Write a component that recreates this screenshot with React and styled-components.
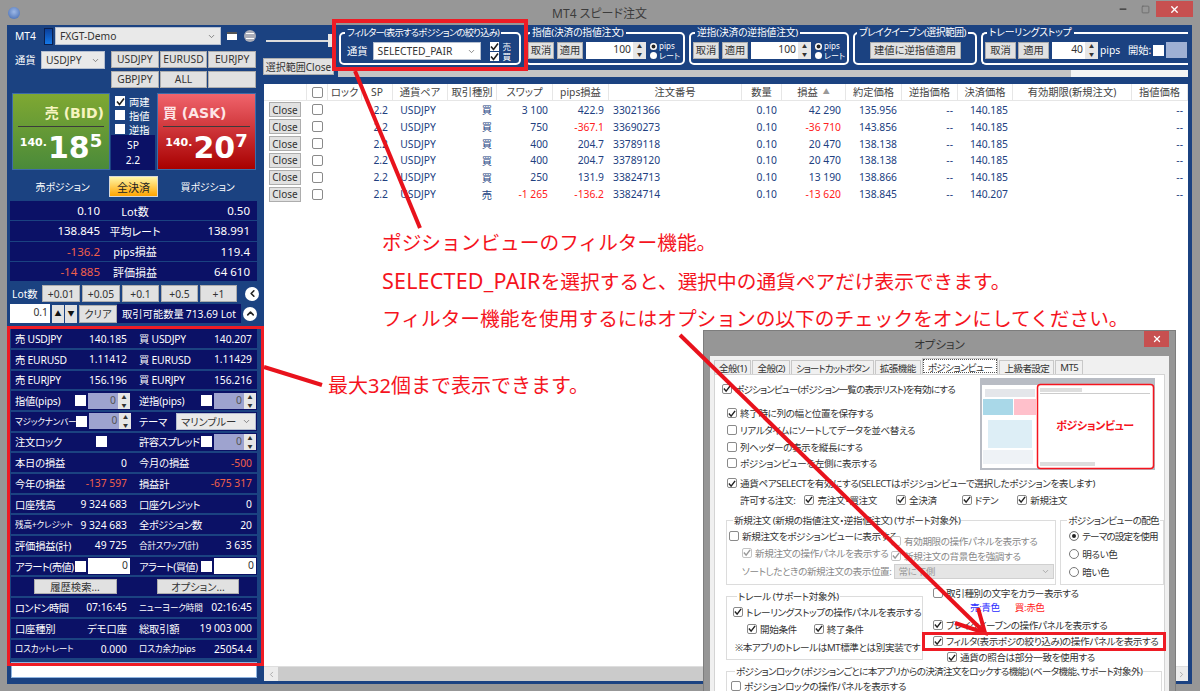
import React from "react";
import styled, { createGlobalStyle } from "styled-components";
import { ChevronDown, ChevronLeft, ChevronRight, ChevronUp, Minus, Square, X } from "lucide-react";

const FONT = `"Noto Sans", "Noto Sans CJK JP", sans-serif`;
const NAVY = "#0b1166";
const BLUE = "#1b4281";
const TABLE_COLS = "43px 21px 34px 31px 55px 49px 56px 56px 133px 40px 64px 56px 56px 55px 119px 56px";

const GlobalStyle = createGlobalStyle`
  html, body {
    margin: 0;
    padding: 0;
    width: 1200px;
    height: 691px;
    overflow: hidden;
    background: #979797;
  }
  body {
    font-family: ${FONT};
    font-size: 10.3px;
    font-feature-settings: "palt";
  }
  * { box-sizing: border-box; }
`;

const Page = styled.div`
  position: relative;
  width: 1200px;
  height: 691px;
  overflow: hidden;
  background: #979797;
  padding: 0 8px 7px 7px;
  display: flex;
  flex-direction: column;
`;

const TitleBar = styled.div`
  height: 25px;
  flex: none;
  display: flex;
  align-items: center;
  justify-content: center;
  position: relative;
  color: #3c3c3c;
  font-size: 12px;
`;

const AppIcon = styled.span`
  position: absolute;
  left: 1px;
  top: 7px;
  width: 12px;
  height: 12px;
  border-radius: 50%;
  background: radial-gradient(circle at 50% 40%, #9db8e6, #3d66b0);
`;

const WinButtons = styled.div`
  position: absolute;
  right: -1px;
  top: 1px;
  display: flex;
  align-items: center;
`;

const WinBtn = styled.span`
  width: ${(p) => p.$w || 22}px;
  height: 16px;
  display: flex;
  align-items: center;
  justify-content: center;
  background: ${(p) => p.$bg || "transparent"};
  color: ${(p) => p.$color || "#333"};
`;

const Body = styled.div`
  flex: 1;
  min-height: 0;
  display: flex;
  background: ${BLUE};
`;

/* ---------- left panel ---------- */

const Left = styled.div`
  width: 250px;
  flex: none;
  padding-top: 2px;
  display: flex;
  flex-direction: column;
  color: #fff;
`;

const AccountRow = styled.div`
  height: 18px;
  display: flex;
  align-items: center;
  padding-left: 8px;
`;

const Connection = styled.span`
  width: 9px;
  height: 17px;
  margin-left: 8px;
  margin-right: 2px;
  border: 1px solid #0a2050;
  background: linear-gradient(#0b3f9a, #1478e8);
`;

const SelectBox = styled.div`
  width: ${(p) => p.$w}px;
  height: ${(p) => p.$h || 18}px;
  flex: none;
  display: flex;
  align-items: center;
  justify-content: space-between;
  padding: 0 4px;
  background: ${(p) => p.$bg || "#e9e9e9"};
  color: #333;
  border: 1px solid #b5bfd0;
  white-space: nowrap;
`;

const MiniWindow = styled.span`
  width: 10px;
  height: 8px;
  margin-left: 6px;
  background: #fff;
  border-top: 2px solid #555;
`;

const Burger = styled.span`
  width: 12px;
  height: 12px;
  margin-left: 7px;
  border-radius: 50%;
  background: #a9acb8;
  display: flex;
  align-items: center;
  justify-content: center;
  &::after {
    content: "";
    width: 8px;
    height: 4px;
    border-top: 1px solid #fff;
    border-bottom: 1px solid #fff;
  }
`;

const CurrencyRow = styled.div`
  margin-top: 6px;
  height: 37px;
  display: flex;
  padding-left: 8px;
`;

const CurrencyLabel = styled.span`
  width: 26px;
  flex: none;
  line-height: 18px;
`;

const PairGrid = styled.div`
  margin-left: 6px;
  width: 145px;
  display: grid;
  grid-template-columns: repeat(3, 1fr);
  grid-auto-rows: 17px;
  gap: 3px 1px;
`;

const Btn = styled.button`
  font: inherit;
  font-feature-settings: inherit;
  width: ${(p) => (p.$w ? `${p.$w}px` : "auto")};
  height: ${(p) => (p.$h ? `${p.$h}px` : "auto")};
  flex: none;
  padding: 0;
  background: #e1e1e1;
  border: 1px solid #adadad;
  color: #333;
  text-align: center;
  line-height: 1;
  white-space: nowrap;
`;

const PriceRow = styled.div`
  margin-top: 5px;
  height: 77px;
  margin-left: 5px;
  display: grid;
  grid-template-columns: 98px 47px 99px;
`;

const Tile = styled.div`
  background: ${(p) =>
    p.$side === "bid"
      ? "linear-gradient(#7fa832, #4a8a3a)"
      : "linear-gradient(#f0646c, #a80000)"};
  border: 1px solid #3d6ba8;
  padding: 0 4px;
  display: flex;
  flex-direction: column;
`;

const TileTitle = styled.div`
  height: 33px;
  border-bottom: 1px solid #3b3b3b;
  margin: 0 1px;
  display: flex;
  align-items: center;
  justify-content: ${(p) => (p.$right ? "flex-end" : "flex-start")};
  font-family: "DejaVu Sans", "Noto Sans CJK JP", sans-serif;
  font-weight: 700;
  font-size: 14px;
  color: ${(p) => (p.$right ? "#f7f4c0" : "#fde6e6")};
  padding-top: 3px;
`;

const Quote = styled.div`
  display: flex;
  align-items: flex-start;
  justify-content: center;
  font-family: "DejaVu Sans", sans-serif;
  font-weight: 700;
  color: #fff;
  margin-top: 5px;
  line-height: 1;
`;

const QuoteHead = styled.span`
  font-size: 11px;
  margin-top: 5px;
`;

const QuoteBig = styled.span`
  font-size: 30px;
  margin-top: 1px;
  padding-left: 1px;
`;

const QuoteTail = styled.span`
  font-size: 18px;
`;

const MidColumn = styled.div`
  display: flex;
  flex-direction: column;
  align-items: stretch;
  padding: 1px 0 0 1px;
`;

const MidOption = styled.label`
  height: 14px;
  display: flex;
  align-items: center;
  gap: 4px;
  padding-left: 4px;
`;

const SpBox = styled.div`
  margin-top: -1px;
  flex: 1;
  background: ${NAVY};
  display: flex;
  flex-direction: column;
  align-items: center;
  justify-content: space-around;
  padding: 2px 0;
  margin-right: 2px;
`;

const PositionHead = styled.div`
  margin-top: 6px;
  height: 21px;
  display: grid;
  grid-template-columns: 93px 49px 1fr;
  align-items: center;
  justify-items: center;
  padding-left: 9px;
  font-size: 10px;
  letter-spacing: -0.2px;
`;

const SettleButton = styled.button`
  font: inherit;
  font-feature-settings: inherit;
  font-size: 11px;
  width: 49px;
  height: 21px;
  padding: 0;
  color: #222;
  border: 1px solid #d8d8d8;
  background: linear-gradient(#fff7a8, #ffa400);
`;

const Summary = styled.div`
  margin: 4px 0 0 3px;
  width: 247px;
  display: flex;
  flex-direction: column;
  gap: 1px;
`;

const SummaryRow = styled.div`
  height: 19.3px;
  background: ${NAVY};
  display: grid;
  grid-template-columns: 90px 70px 1fr;
  align-items: center;
  font-size: 11.5px;
  padding-right: 7px;
`;

const SummaryValue = styled.span`
  text-align: right;
  color: ${(p) => (p.$neg ? "#f0604a" : "#fff")};
`;

const SummaryLabel = styled.span`
  text-align: center;
  white-space: nowrap;
  font-size: 11px;
`;

const LotRow = styled.div`
  margin: 4px 0 0 5px;
  height: 17px;
  display: flex;
  align-items: center;
  gap: 2px;
`;

const LotLabel = styled.span`
  width: 28px;
  flex: none;
`;

const RoundBtn = styled.span`
  width: 14px;
  height: 14px;
  flex: none;
  margin-left: ${(p) => p.$ml || 0}px;
  border-radius: 50%;
  background: #fff;
  color: #222;
  display: flex;
  align-items: center;
  justify-content: center;
`;

const ClearRow = styled.div`
  margin: 2px 0 0 3px;
  height: 19px;
  display: flex;
  align-items: center;
`;

const LotInput = styled.div`
  width: 44px;
  height: 19px;
  background: #fff;
  color: #333;
  text-align: right;
  padding-right: 2px;
  line-height: 17px;
`;

const ArrowBtn = styled.span`
  width: 12px;
  height: 18px;
  flex: none;
  margin-left: ${(p) => p.$ml || 0}px;
  background: #e1e1e1;
  color: #111;
  font-size: 7px;
  line-height: 18px;
  text-align: center;
`;

const ClearBtn = styled(Btn)`
  margin-left: 2px;
`;

const TradableBox = styled.div`
  width: 124px;
  height: 19px;
  flex: none;
  background: ${NAVY};
  display: flex;
  align-items: center;
  justify-content: space-between;
  padding: 0 5px;
  white-space: nowrap;
`;

const Quotes = styled.div`
  margin: 6px 0 0 4px;
  width: 246px;
  display: flex;
  flex-direction: column;
  gap: 2px;
`;

const QuoteRow = styled.div`
  height: 18.7px;
  background: ${NAVY};
  display: grid;
  grid-template-columns: 128px 118px;
  align-items: center;
`;

const HalfCell = styled.div`
  display: flex;
  align-items: center;
  justify-content: space-between;
  padding-left: ${(p) => (p.$second ? 0 : 4)}px;
  padding-right: ${(p) => (p.$second ? 5 : 12)}px;
  min-width: 0;
`;

const CtrlCell = styled(HalfCell)`
  padding-right: ${(p) => (p.$second ? 1 : 9)}px;
`;

const Group = styled.span`
  display: flex;
  align-items: center;
  gap: 2px;
  margin-right: ${(p) => p.$mr || 0}px;
`;

const CellLabel = styled.span`
  font-size: ${(p) => (p.$small ? 8.6 : 10.3)}px;
  letter-spacing: ${(p) => (p.$tight ? -0.6 : -0.2)}px;
  white-space: nowrap;
`;

const CellValue = styled.span`
  color: ${(p) => (p.$neg ? "#f0604a" : "#fff")};
  white-space: nowrap;
`;

const SpinField = styled.span`
  width: ${(p) => p.$w || 42}px;
  height: 16px;
  flex: none;
  display: flex;
  background: ${(p) => (p.$on ? "#fff" : "#9ea3cf")};
  color: ${(p) => (p.$on ? "#333" : "#555")};
`;

const SpinValue = styled.span`
  flex: 1;
  text-align: right;
  padding-right: 2px;
  line-height: 15px;
`;

const SpinArrows = styled.span`
  width: ${(p) => p.$w || 12}px;
  display: flex;
  flex-direction: column;
  background: #e6e6e6;
  flex: none;
  color: #333;
  font-size: 5px;
  line-height: 8px;
  text-align: center;
`;

const ActionRow = styled.div`
  height: 18.7px;
  background: ${NAVY};
  display: grid;
  grid-template-columns: 128px 118px;
  align-items: center;
  justify-items: center;
`;

const BottomInput = styled.div`
  margin: 4px 0 0 4px;
  width: 246px;
  height: 16px;
  background: #fff;
  border: 1px solid #8fb4e0;
`;

/* ---------- right panel ---------- */

const Right = styled.div`
  flex: 1;
  min-width: 0;
  padding: 0 4px 3px 6px;
  display: flex;
  flex-direction: column;
`;

const Toolbar = styled.div`
  height: 59px;
  flex: none;
  display: grid;
  grid-template-columns: 75px 1fr;
`;

const ToolLeft = styled.div`
  padding-top: 9px;
  display: flex;
  flex-direction: column;
`;

const Slider = styled.div`
  height: 13px;
  display: flex;
  align-items: center;
  padding-left: 3px;
  &::before {
    content: "";
    width: 62px;
    height: 2px;
    background: #dcdcdc;
  }
  &::after {
    content: "";
    width: 7px;
    height: 13px;
    background: #e6e6e6;
  }
`;

const CloseRange = styled(Btn)`
  margin-top: 11px;
  width: 71px;
  height: 17px;
  font-size: 10px;
`;

const ToolRight = styled.div`
  padding-top: 1px;
  display: flex;
  flex-direction: column;
  color: #fff;
`;

const Groups = styled.div`
  display: flex;
  gap: 4px;
  height: 39px;
  padding-left: 1px;
`;

const ToolGroup = styled.fieldset`
  margin: 0;
  min-width: 0;
  width: ${(p) => p.$w}px;
  flex: none;
  height: 39px;
  padding: 2px 0 0 ${(p) => p.$pl ?? 2}px;
  border: 2px solid #fff;
  border-right-width: ${(p) => (p.$open ? 0 : 2)}px;
  border-radius: ${(p) => (p.$open ? "5px 0 0 5px" : "5px")};
  display: flex;
  align-items: flex-start;
  justify-content: ${(p) => p.$justify || "flex-start"};
`;

const ToolLegend = styled.legend`
  padding: 0 2px;
  margin-left: 2px;
  line-height: 14px;
  height: 14px;
  font-size: ${(p) => p.$size || 9.8}px;
  letter-spacing: ${(p) => p.$ls ?? -0.2}px;
  white-space: nowrap;
`;

const ToolBtn = styled(Btn)`
  width: ${(p) => p.$w || 26}px;
  height: 17px;
  margin-right: ${(p) => p.$mr ?? 3}px;
`;

const NumberBox = styled.span`
  display: flex;
  flex: none;
  width: ${(p) => p.$w || 60}px;
  height: 17px;
  background: #fff;
  color: #333;
`;

const RadioStack = styled.span`
  margin-left: 4px;
  display: grid;
  grid-template-columns: 7px auto;
  column-gap: 2px;
  row-gap: 1px;
  align-items: center;
  font-size: 8px;
  line-height: 8.5px;
  white-space: nowrap;
`;

const Radio = styled.span`
  width: 7px;
  height: 7px;
  border-radius: 50%;
  background: #fff;
  box-shadow: ${(p) => (p.$on ? "inset 0 0 0 1.5px #fff, inset 0 0 0 4px #222" : "none")};
`;

const FilterLabel = styled.span`
  margin: 1px 5px 0 4px;
  line-height: 16px;
`;

const FilterChecks = styled.span`
  margin-left: 9px;
  display: grid;
  grid-template-columns: 10px auto;
  column-gap: 3px;
  row-gap: 1px;
  align-items: center;
  font-size: 8.5px;
  line-height: 9px;
`;

const Swatch = styled.span`
  width: 21px;
  height: 16px;
  flex: none;
  margin-left: 2px;
  background: #9eb0d4;
`;

const PipsText = styled.span`
  margin: 1px 9px 0 2px;
  line-height: 15px;
  width: 19px;
  flex: none;
`;

const StartLabel = styled.span`
  line-height: 17px;
  width: 23px;
  flex: none;
  white-space: nowrap;
`;

const StartCheck = styled.span`
  margin: 3px 0 0 2px;
  flex: none;
  display: flex;
`;

const Track = styled.div`
  margin-top: 5px;
  height: 7px;
  display: flex;
  background: #f4f4f4;
  &::before {
    content: "";
    width: 733px;
    background: #c4c4c4;
  }
`;

const TableWrap = styled.div`
  flex: 1;
  min-height: 0;
  margin-left: 1px;
  background: #fff;
  display: flex;
  flex-direction: column;
`;

const TableBody = styled.div`
  flex: 1;
  min-height: 0;
`;

const Row = styled.div`
  display: grid;
  grid-template-columns: ${TABLE_COLS};
  height: ${(p) => (p.$head ? 17 : 16.85)}px;
  align-items: center;
  border-bottom: ${(p) => (p.$head ? "1px solid #e6e6e6" : "0")};
  margin-bottom: ${(p) => (p.$head ? 0.5 : 0)}px;
`;

const Head = styled.div`
  height: 100%;
  text-align: center;
  line-height: 16px;
  color: #444;
  border-right: 1px solid #e6e6e6;
  white-space: nowrap;
  display: flex;
  align-items: center;
  justify-content: center;
  gap: 5px;
`;

const SortMark = styled.span`
  color: #999;
  font-size: 7px;
`;

const Cell = styled.div`
  text-align: ${(p) => p.$align || "right"};
  padding: 0 ${(p) => (p.$align === "left" ? 0 : 5)}px 0 ${(p) => (p.$align === "left" ? 4 : 0)}px;
  color: ${(p) => (p.$neg ? "#ff2020" : "#21407f")};
  white-space: nowrap;
`;

const CloseBtn = styled(Btn)`
  width: 32px;
  height: 15px;
  margin-left: 5px;
  font-size: 10px;
`;

const CheckCell = styled.div`
  display: flex;
  justify-content: center;
`;

const HScroll = styled.div`
  height: 15px;
  flex: none;
  background: #cbcbcb;
  border-top: 1px solid #dedede;
  display: flex;
  justify-content: space-between;
`;

const HScrollEnd = styled.span`
  width: 14px;
  display: flex;
  align-items: center;
  justify-content: center;
  background: #ececec;
  color: #999;
`;

/* ---------- controls ---------- */

const CheckBox = styled.span`
  width: ${(p) => p.$size || 11}px;
  height: ${(p) => p.$size || 11}px;
  flex: none;
  display: inline-flex;
  align-items: center;
  justify-content: center;
  background: #fff;
  border: ${(p) => (p.$outline ? `1px solid ${p.$dim ? "#c4c4c4" : "#8a8a8a"}` : "0")};
  border-radius: ${(p) => (p.$outline ? 2 : 0)}px;
`;

const Check = ({ on, size, outline, dim }) => (
  <CheckBox $size={size} $outline={outline} $dim={dim}>
    {on && (
      <svg width="9" height="9" viewBox="0 0 9 9">
        <path d="M1 4.5 L3.5 7.5 L8 1.5" fill="none" stroke={dim ? "#999" : "#222"} strokeWidth="1.6" />
      </svg>
    )}
  </CheckBox>
);

const Spin = ({ w, value, on, arrowW }) => (
  <SpinField $w={w} $on={on}>
    <SpinValue>{value}</SpinValue>
    {!on && (
      <SpinArrows $w={arrowW}>
        <span>▲</span>
        <span>▼</span>
      </SpinArrows>
    )}
  </SpinField>
);

const NumberInput = ({ w, value }) => (
  <NumberBox $w={w}>
    <SpinValue>{value}</SpinValue>
    <SpinArrows $w={13}>
      <span>▲</span>
      <span>▼</span>
    </SpinArrows>
  </NumberBox>
);

/* ---------- options dialog ---------- */

const Dialog = styled.div`
  position: absolute;
  left: 703px;
  top: 330px;
  width: 473px;
  height: 400px;
  background: #969696;
  border: 1px solid #7d7d7d;
  padding: 0 6px;
  color: #333;
  font-size: 9.6px;
  letter-spacing: -0.4px;
`;

const DialogTitle = styled.div`
  height: 25px;
  display: flex;
  align-items: center;
  justify-content: center;
  font-size: 11.5px;
  letter-spacing: 0;
  color: #333;
  position: relative;
`;

const DialogClose = styled.span`
  position: absolute;
  right: 0;
  top: 0;
  width: 25px;
  height: 16px;
  background: #c75050;
  color: #fff;
  display: flex;
  align-items: center;
  justify-content: center;
`;

const DialogInner = styled.div`
  height: 100%;
  background: #f0f0f0;
  padding: 3px 4px 0;
`;

const Tabs = styled.div`
  display: flex;
  height: 15px;
  align-items: flex-end;
  letter-spacing: -0.6px;
`;

const TabItem = styled.span`
  height: ${(p) => (p.$on ? 16 : 14)}px;
  padding: 0 ${(p) => (p.$on ? 5 : 4)}px;
  margin-right: 1px;
  display: flex;
  align-items: center;
  border: 1px solid #c8c8c8;
  border-bottom: 0;
  background: ${(p) => (p.$on ? "#fff" : "#f0f0f0")};
  outline: ${(p) => (p.$on ? "1px dotted #555" : "none")};
  outline-offset: -2px;
  letter-spacing: ${(p) => (p.$tight ? "-1px" : "inherit")};
  white-space: nowrap;
`;

const Pane = styled.div`
  background: #fff;
  border: 1px solid #d4d4d4;
  padding-left: 7px;
  height: 400px;
`;

const TopBlock = styled.div`
  display: flex;
  justify-content: space-between;
  padding-right: 9px;
`;

const Thumb = styled.svg`
  margin-top: 3px;
  flex: none;
`;

const OptRow = styled.div`
  height: ${(p) => p.$h || 16.7}px;
  display: flex;
  align-items: center;
  gap: ${(p) => p.$gap || 3}px;
  padding-left: ${(p) => p.$indent || 0}px;
  margin-top: ${(p) => p.$mt || 0}px;
  color: ${(p) => (p.$dim ? "#888" : "inherit")};
  letter-spacing: ${(p) => (p.$tight ? "-0.85px" : "inherit")};
  white-space: nowrap;
`;

const Allowed = styled.span`
  display: inline-flex;
  align-items: center;
  gap: 3px;
  margin-left: ${(p) => p.$ml || 0}px;
`;

const GroupsRow = styled.div`
  display: flex;
  gap: 4px;
  padding-left: 4px;
  margin-top: ${(p) => p.$mt || 0}px;
`;

const OptGroup = styled.fieldset`
  margin: 0;
  min-width: 0;
  width: ${(p) => p.$w}px;
  height: ${(p) => p.$h}px;
  padding: 0 0 0 ${(p) => p.$pl ?? 2}px;
  border: 1px solid #dcdcdc;
`;

const OptLegend = styled.legend`
  padding: 0 1px;
  margin-left: 4px;
  line-height: 13px;
  height: 13px;
  letter-spacing: ${(p) => (p.$tight ? "-0.65px" : "inherit")};
  white-space: nowrap;
`;

const TwoCols = styled.div`
  display: grid;
  grid-template-columns: 162px 1fr;
`;

const DisabledSelect = styled.span`
  width: 160px;
  height: 15px;
  background: #e5e5e5;
  border: 1px solid #d0d0d0;
  color: #999;
  display: flex;
  align-items: center;
  justify-content: space-between;
  padding: 0 3px;
`;

const SideColumn = styled.div`
  padding: 0 0 0 6px;
  margin-top: -5px;
`;

const ColorNote = styled.div`
  height: 14px;
  padding-left: 37px;
  display: flex;
  gap: 15px;
  line-height: 14px;
`;

const ColorWord = styled.span`
  color: ${(p) => p.$color};
`;

const RadioOpt = styled.span`
  width: 10px;
  height: 10px;
  flex: none;
  border-radius: 50%;
  border: 1px solid #777;
  background: #fff;
  box-shadow: ${(p) => (p.$on ? "inset 0 0 0 2px #fff, inset 0 0 0 5px #222" : "none")};
`;

/* ---------- annotations ---------- */

const Overlay = styled.svg`
  position: absolute;
  left: 0;
  top: 0;
  pointer-events: none;
`;

const RedBox = styled.div`
  position: absolute;
  left: ${(p) => p.$x}px;
  top: ${(p) => p.$y}px;
  width: ${(p) => p.$w}px;
  height: ${(p) => p.$h}px;
  border: ${(p) => p.$b || 3}px solid #ee1c25;
`;

const Note = styled.div`
  position: absolute;
  left: ${(p) => p.$x}px;
  top: ${(p) => p.$y}px;
  color: #f5141e;
  font-size: ${(p) => p.$size}px;
  line-height: 37.5px;
  white-space: nowrap;
  font-feature-settings: normal;
`;

const NoteLatin = styled.span`
  font-size: 21.5px;
  letter-spacing: 0.2px;
`;

/* ---------- data ---------- */

const POSITIONS = [
  { type: "買", swap: "3 100", pips: "422.9", id: "33021366", pl: "42 290", open: "135.956", exit: "140.185" },
  { type: "買", swap: "750", pips: "-367.1", id: "33690273", pl: "-36 710", open: "143.856", exit: "140.185" },
  { type: "買", swap: "400", pips: "204.7", id: "33789118", pl: "20 470", open: "138.138", exit: "140.185" },
  { type: "買", swap: "400", pips: "204.7", id: "33789120", pl: "20 470", open: "138.138", exit: "140.185" },
  { type: "買", swap: "250", pips: "131.9", id: "33824713", pl: "13 190", open: "138.866", exit: "140.185" },
  { type: "売", swap: "-1 265", pips: "-136.2", id: "33824714", pl: "-13 620", open: "138.845", exit: "140.207" },
];

const COLUMNS = ["", "", "ロック", "SP", "通貨ペア", "取引種別", "スワップ", "pips損益", "注文番号", "数量", "損益", "約定価格", "逆指価格", "決済価格", "有効期限(新規注文)", "指値価格"];

const TOP_RATES = [
  ["売 USDJPY", "140.185", "買 USDJPY", "140.207"],
  ["売 EURUSD", "1.11412", "買 EURUSD", "1.11429"],
  ["売 EURJPY", "156.196", "買 EURJPY", "156.216"],
];

const ACCOUNT_ROWS = [
  [{ t: "本日の損益" }, { t: "0" }, { t: "今月の損益" }, { t: "-500", neg: true }],
  [{ t: "今年の損益" }, { t: "-137 597", neg: true }, { t: "損益計" }, { t: "-675 317", neg: true }],
  [{ t: "口座残高" }, { t: "9 324 683" }, { t: "口座クレジット", tight: true }, { t: "0" }],
  [{ t: "残高+クレジット", small: true }, { t: "9 324 683" }, { t: "全ポジション数", tight: true }, { t: "20" }],
  [{ t: "評価損益(計)" }, { t: "49 725" }, { t: "合計スワップ(計)", small: true }, { t: "3 635" }],
];

const TIME_ROWS = [
  [{ t: "ロンドン時間", tight: true }, { t: "07:16:45" }, { t: "ニューヨーク時間", small: true }, { t: "02:16:45" }],
  [{ t: "口座種別" }, { t: "デモ口座" }, { t: "総取引額" }, { t: "19 003 000" }],
  [{ t: "ロスカットレート", small: true }, { t: "0.000" }, { t: "ロスカ余力pips", small: true }, { t: "25054.4" }],
];

const InfoRow = ({ cells }) => (
  <QuoteRow>
    <HalfCell>
      <CellLabel $small={cells[0].small} $tight={cells[0].tight}>{cells[0].t}</CellLabel>
      <CellValue $neg={cells[1].neg}>{cells[1].t}</CellValue>
    </HalfCell>
    <HalfCell $second>
      <CellLabel $small={cells[2].small} $tight={cells[2].tight}>{cells[2].t}</CellLabel>
      <CellValue $neg={cells[3].neg}>{cells[3].t}</CellValue>
    </HalfCell>
  </QuoteRow>
);

const LeftPanel = () => (
  <Left>
    <AccountRow>
      <span>MT4</span>
      <Connection />
      <SelectBox $w={166}>
        <span>FXGT-Demo</span>
        <ChevronDown size={9} color="#666" />
      </SelectBox>
      <MiniWindow />
      <Burger />
    </AccountRow>
    <CurrencyRow>
      <CurrencyLabel>通貨</CurrencyLabel>
      <SelectBox $w={64}>
        <span>USDJPY</span>
        <ChevronDown size={9} color="#666" />
      </SelectBox>
      <PairGrid>
        <Btn>USDJPY</Btn>
        <Btn>EURUSD</Btn>
        <Btn>EURJPY</Btn>
        <Btn>GBPJPY</Btn>
        <Btn>ALL</Btn>
        <Btn />
      </PairGrid>
    </CurrencyRow>
    <PriceRow>
      <Tile $side="bid">
        <TileTitle $right>売 (BID)</TileTitle>
        <Quote>
          <QuoteHead>140.</QuoteHead>
          <QuoteBig>18</QuoteBig>
          <QuoteTail>5</QuoteTail>
        </Quote>
      </Tile>
      <MidColumn>
        <MidOption>
          <Check on size={10} />
          両建
        </MidOption>
        <MidOption>
          <Check size={10} />
          指値
        </MidOption>
        <MidOption>
          <Check size={10} />
          逆指
        </MidOption>
        <SpBox>
          <span>SP</span>
          <span>2.2</span>
        </SpBox>
      </MidColumn>
      <Tile $side="ask">
        <TileTitle>買 (ASK)</TileTitle>
        <Quote>
          <QuoteHead>140.</QuoteHead>
          <QuoteBig>20</QuoteBig>
          <QuoteTail>7</QuoteTail>
        </Quote>
      </Tile>
    </PriceRow>
    <PositionHead>
      <span>売ポジション</span>
      <SettleButton>全決済</SettleButton>
      <span>買ポジション</span>
    </PositionHead>
    <Summary>
      <SummaryRow>
        <SummaryValue>0.10</SummaryValue>
        <SummaryLabel>Lot数</SummaryLabel>
        <SummaryValue>0.50</SummaryValue>
      </SummaryRow>
      <SummaryRow>
        <SummaryValue>138.845</SummaryValue>
        <SummaryLabel>平均レート</SummaryLabel>
        <SummaryValue>138.991</SummaryValue>
      </SummaryRow>
      <SummaryRow>
        <SummaryValue $neg>-136.2</SummaryValue>
        <SummaryLabel>pips損益</SummaryLabel>
        <SummaryValue>119.4</SummaryValue>
      </SummaryRow>
      <SummaryRow>
        <SummaryValue $neg>-14 885</SummaryValue>
        <SummaryLabel>評価損益</SummaryLabel>
        <SummaryValue>64 610</SummaryValue>
      </SummaryRow>
    </Summary>
    <LotRow>
      <LotLabel>Lot数</LotLabel>
      <Btn $w={38} $h={17}>+0.01</Btn>
      <Btn $w={38} $h={17}>+0.05</Btn>
      <Btn $w={37} $h={17}>+0.1</Btn>
      <Btn $w={37} $h={17}>+0.5</Btn>
      <Btn $w={37} $h={17}>+1</Btn>
      <RoundBtn $ml={6}>
        <ChevronLeft size={11} strokeWidth={3.5} />
      </RoundBtn>
    </LotRow>
    <ClearRow>
      <LotInput>0.1</LotInput>
      <ArrowBtn $ml={2}>▲</ArrowBtn>
      <ArrowBtn $ml={1}>▼</ArrowBtn>
      <ClearBtn $w={38} $h={18}>クリア</ClearBtn>
      <TradableBox>
        <span>取引可能数量</span>
        <span>713.69 Lot</span>
      </TradableBox>
      <RoundBtn $ml={2}>
        <ChevronUp size={11} strokeWidth={3.5} />
      </RoundBtn>
    </ClearRow>
    <Quotes>
      {TOP_RATES.map((r) => (
        <InfoRow key={r[0]} cells={r.map((t) => ({ t }))} />
      ))}
      <QuoteRow>
        <CtrlCell>
          <CellLabel>指値(pips)</CellLabel>
          <Group>
            <Check />
            <Spin value="0" />
          </Group>
        </CtrlCell>
        <CtrlCell $second>
          <CellLabel>逆指(pips)</CellLabel>
          <Group>
            <Check />
            <Spin value="0" />
          </Group>
        </CtrlCell>
      </QuoteRow>
      <QuoteRow>
        <CtrlCell>
          <CellLabel $small>マジックナンバー</CellLabel>
          <Group>
            <Check />
            <Spin value="0" />
          </Group>
        </CtrlCell>
        <CtrlCell $second>
          <CellLabel>テーマ</CellLabel>
          <SelectBox $w={80} $h={17}>
            <span>マリンブルー</span>
            <ChevronDown size={9} color="#666" />
          </SelectBox>
        </CtrlCell>
      </QuoteRow>
      <QuoteRow>
        <CtrlCell>
          <CellLabel>注文ロック</CellLabel>
          <Group $mr={23}>
            <Check />
          </Group>
        </CtrlCell>
        <CtrlCell $second>
          <CellLabel $tight>許容スプレッド</CellLabel>
          <Group>
            <Check />
            <Spin value="0" />
          </Group>
        </CtrlCell>
      </QuoteRow>
      {ACCOUNT_ROWS.map((r) => (
        <InfoRow key={r[0].t} cells={r} />
      ))}
      <QuoteRow>
        <CtrlCell>
          <CellLabel $tight>アラート(売値)</CellLabel>
          <Group>
            <Check />
            <Spin on w={42} value="0" />
          </Group>
        </CtrlCell>
        <CtrlCell $second>
          <CellLabel $tight>アラート(買値)</CellLabel>
          <Group>
            <Check />
            <Spin on w={42} value="0" />
          </Group>
        </CtrlCell>
      </QuoteRow>
      <ActionRow>
        <Btn $w={83} $h={15}>履歴検索...</Btn>
        <Btn $w={82} $h={15}>オプション...</Btn>
      </ActionRow>
      {TIME_ROWS.map((r) => (
        <InfoRow key={r[0].t} cells={r} />
      ))}
    </Quotes>
    <BottomInput />
  </Left>
);

const ToolPanel = () => (
  <Toolbar>
    <ToolLeft>
      <Slider />
      <CloseRange>選択範囲Close</CloseRange>
    </ToolLeft>
    <ToolRight>
      <Groups>
        <ToolGroup $w={182}>
          <ToolLegend $size={9.3} $ls={-0.75}>フィルター(表示するポジションの絞り込み)</ToolLegend>
          <FilterLabel>通貨</FilterLabel>
          <SelectBox $w={108} $bg="#fff">
            <span>SELECTED_PAIR</span>
            <ChevronDown size={9} color="#666" />
          </SelectBox>
          <FilterChecks>
            <Check on size={9} />
            <span>売</span>
            <Check on size={9} />
            <span>買</span>
          </FilterChecks>
        </ToolGroup>
        <ToolGroup $w={160} $pl={1}>
          <ToolLegend>指値(決済の指値注文)</ToolLegend>
          <ToolBtn>取消</ToolBtn>
          <ToolBtn>適用</ToolBtn>
          <NumberInput value="100" />
          <RadioStack>
            <Radio $on />
            <span>pips</span>
            <Radio />
            <span>レート</span>
          </RadioStack>
        </ToolGroup>
        <ToolGroup $w={160} $pl={2}>
          <ToolLegend>逆指(決済の逆指値注文)</ToolLegend>
          <ToolBtn>取消</ToolBtn>
          <ToolBtn>適用</ToolBtn>
          <NumberInput value="100" />
          <RadioStack>
            <Radio $on />
            <span>pips</span>
            <Radio />
            <span>レート</span>
          </RadioStack>
        </ToolGroup>
        <ToolGroup $w={124} $justify="center" $pl={0}>
          <ToolLegend $ls={-0.55}>ブレイクイーブン(選択範囲)</ToolLegend>
          <Btn $w={91} $h={17}>建値に逆指値適用</Btn>
        </ToolGroup>
        <ToolGroup $w={207} $open>
          <ToolLegend>トレーリングストップ</ToolLegend>
          <ToolBtn $w={31} $mr={2}>取消</ToolBtn>
          <ToolBtn $w={31}>適用</ToolBtn>
          <NumberInput w={46} value="40" />
          <PipsText>pips</PipsText>
          <StartLabel>開始:</StartLabel>
          <StartCheck>
            <Check />
          </StartCheck>
          <Swatch />
        </ToolGroup>
      </Groups>
      <Track />
    </ToolRight>
  </Toolbar>
);

const PositionTable = () => (
  <TableWrap>
    <TableBody>
      <Row $head>
        {COLUMNS.map((c, i) => (
          <Head key={i}>
            {i === 1 ? <Check outline /> : c}
            {c === "損益" && <SortMark>▲</SortMark>}
          </Head>
        ))}
      </Row>
      {POSITIONS.map((p) => (
        <Row key={p.id}>
          <CloseBtn>Close</CloseBtn>
          <CheckCell>
            <Check outline />
          </CheckCell>
          <Cell />
          <Cell>2.2</Cell>
          <Cell $align="center">USDJPY</Cell>
          <Cell>{p.type}</Cell>
          <Cell $neg={p.swap.startsWith("-")}>{p.swap}</Cell>
          <Cell $neg={p.pips.startsWith("-")}>{p.pips}</Cell>
          <Cell $align="left">{p.id}</Cell>
          <Cell>0.10</Cell>
          <Cell $neg={p.pl.startsWith("-")}>{p.pl}</Cell>
          <Cell>{p.open}</Cell>
          <Cell>--</Cell>
          <Cell>{p.exit}</Cell>
          <Cell />
          <Cell>--</Cell>
        </Row>
      ))}
    </TableBody>
    <HScroll>
      <HScrollEnd>
        <ChevronLeft size={9} />
      </HScrollEnd>
      <HScrollEnd>
        <ChevronRight size={9} />
      </HScrollEnd>
    </HScroll>
  </TableWrap>
);

const OptionsDialog = () => (
  <Dialog>
    <DialogTitle>
      オプション
      <DialogClose>
        <X size={10} strokeWidth={3} />
      </DialogClose>
    </DialogTitle>
    <DialogInner>
      <Tabs>
        <TabItem>全般(1)</TabItem>
        <TabItem>全般(2)</TabItem>
        <TabItem $tight>ショートカットボタン</TabItem>
        <TabItem>拡張機能</TabItem>
        <TabItem $on>ポジションビュー</TabItem>
        <TabItem>上級者設定</TabItem>
        <TabItem>MT5</TabItem>
      </Tabs>
      <Pane>
        <TopBlock>
          <div>
            <OptRow $mt={5} $h={17} $tight>
              <Check on outline size={10} />
              ポジションビュー(ポジション一覧の表示リスト)を有効にする
            </OptRow>
            <OptRow $mt={8} $indent={5}>
              <Check on outline size={10} />
              終了時に列の幅と位置を保存する
            </OptRow>
            <OptRow $indent={5}>
              <Check outline size={10} />
              リアルタイムにソートしてデータを並べ替える
            </OptRow>
            <OptRow $indent={5}>
              <Check outline size={10} />
              列ヘッダーの表示を縦長にする
            </OptRow>
            <OptRow $indent={5}>
              <Check outline size={10} />
              ポジションビューを左側に表示する
            </OptRow>
          </div>
          <Thumb width="175" height="92" viewBox="0 0 175 92">
            <rect width="175" height="92" fill="#b8bcc4" />
            <rect x="2" y="7" width="171" height="83" fill="#fff" />
            <rect x="5" y="11" width="50" height="8" fill="#e4e6ea" />
            <rect x="3" y="21" width="30" height="16" fill="#a9d8e8" />
            <rect x="34" y="21" width="22" height="16" fill="#ffc0cb" />
            <rect x="8" y="42" width="44" height="28" fill="#ddeef6" />
            <rect x="3" y="72" width="50" height="14" fill="#eef2f6" />
            <rect x="57.5" y="6.5" width="116" height="84" rx="3" fill="#fff" stroke="#f5141e" strokeWidth="1.5" />
            <rect x="60" y="84" width="55" height="4" fill="#ddd" />
            <rect x="60" y="10" width="42" height="4" fill="#ddd" />
            <rect x="60" y="15" width="110" height="1" fill="#ccc" />
            <text x="115" y="52" textAnchor="middle" fontSize="11" fontWeight="700" fill="#f5141e" fontFamily="Noto Sans CJK JP">
              ポジションビュー
            </text>
          </Thumb>
        </TopBlock>
        <OptRow $indent={5} $mt={3}>
          <Check on outline size={10} />
          通貨ペアSELECTを有効にする(SELECTはポジションビューで選択したポジションを表します)
        </OptRow>
        <OptRow $indent={18}>
          許可する注文:
          <Allowed $ml={6}>
            <Check on outline size={10} />
            売注文・買注文
          </Allowed>
          <Allowed $ml={16}>
            <Check on outline size={10} />
            全決済
          </Allowed>
          <Allowed $ml={22}>
            <Check on outline size={10} />
            ドテン
          </Allowed>
          <Allowed $ml={16}>
            <Check on outline size={10} />
            新規注文
          </Allowed>
        </OptRow>
        <GroupsRow $mt={6}>
          <OptGroup $w={331} $h={71}>
            <OptLegend>新規注文 (新規の指値注文・逆指値注文) (サポート対象外)</OptLegend>
            <TwoCols>
              <div>
                <OptRow $h={17}>
                  <Check outline size={10} />
                  新規注文をポジションビューに表示する
                </OptRow>
                <OptRow $h={17} $indent={13} $dim>
                  <Check on outline dim size={10} />
                  新規注文の操作パネルを表示する
                </OptRow>
              </div>
              <div>
                <OptRow $h={17} $mt={5} $dim>
                  <Check outline dim size={10} />
                  有効期限の操作パネルを表示する
                </OptRow>
                <OptRow $h={13} $dim>
                  <Check on outline dim size={10} />
                  新規注文の背景色を強調する
                </OptRow>
              </div>
            </TwoCols>
            <OptRow $h={18} $indent={13} $dim>
              ソートしたときの新規注文の表示位置:
              <DisabledSelect>
                常に下側
                <ChevronDown size={9} />
              </DisabledSelect>
            </OptRow>
          </OptGroup>
          <OptGroup $w={104} $h={71} $pl={2}>
            <OptLegend $tight>ポジションビューの配色</OptLegend>
            <OptRow $h={18} $indent={6} $tight>
              <RadioOpt $on />
              テーマの設定を使用
            </OptRow>
            <OptRow $h={18} $indent={6}>
              <RadioOpt />
              明るい色
            </OptRow>
            <OptRow $h={18} $indent={6}>
              <RadioOpt />
              暗い色
            </OptRow>
          </OptGroup>
        </GroupsRow>
        <GroupsRow $mt={5}>
          <OptGroup $w={197} $h={70} $pl={6}>
            <OptLegend>トレール (サポート対象外)</OptLegend>
            <OptRow $h={17}>
              <Check on outline size={10} />
              トレーリングストップの操作パネルを表示する
            </OptRow>
            <OptRow $h={17} $indent={14}>
              <Check on outline size={10} />
              開始条件
              <Allowed $ml={14}>
                <Check on outline size={10} />
                終了条件
              </Allowed>
            </OptRow>
            <OptRow $h={19} $indent={2}>
              ※本アプリのトレールはMT標準とは別実装です
            </OptRow>
          </OptGroup>
          <SideColumn>
            <OptRow $h={16}>
              <Check outline size={10} />
              取引種別の文字をカラー表示する
            </OptRow>
            <ColorNote>
              <ColorWord $color="#2b2bff">売:青色</ColorWord>
              <ColorWord $color="#ff2020">買:赤色</ColorWord>
            </ColorNote>
            <OptRow $h={17} $mt={1}>
              <Check on outline size={10} />
              ブレイクイーブンの操作パネルを表示する
            </OptRow>
            <OptRow $h={16}>
              <Check on outline size={10} />
              フィルタ(表示ポジの絞り込み)の操作パネルを表示する
            </OptRow>
            <OptRow $h={16} $indent={14}>
              <Check on outline size={10} />
              通貨の照合は部分一致を使用する
            </OptRow>
          </SideColumn>
        </GroupsRow>
        <GroupsRow>
          <OptGroup $w={436} $h={40} $pl={4}>
            <OptLegend $tight>ポジションロック (ポジションごとに本アプリからの決済注文をロックする機能) (ベータ機能、サポート対象外)</OptLegend>
            <OptRow $h={15}>
              <Check outline size={10} />
              ポジションロックの操作パネルを表示する
            </OptRow>
          </OptGroup>
        </GroupsRow>
      </Pane>
    </DialogInner>
  </Dialog>
);

const App = () => (
  <Page>
    <GlobalStyle />
    <TitleBar>
      <AppIcon />
      MT4 スピード注文
      <WinButtons>
        <WinBtn>
          <Minus size={10} strokeWidth={3} />
        </WinBtn>
        <WinBtn $color="#666">
          <Square size={9} />
        </WinBtn>
        <WinBtn $w={37} $bg="#c75050" $color="#fff">
          <X size={11} strokeWidth={3} />
        </WinBtn>
      </WinButtons>
    </TitleBar>
    <Body>
      <LeftPanel />
      <Right>
        <ToolPanel />
        <PositionTable />
      </Right>
    </Body>
    <OptionsDialog />
    <Overlay width="1200" height="691" viewBox="0 0 1200 691">
      <g stroke="#e8121c" strokeWidth="4" fill="none">
        <path d="M355 71 L420 228" />
        <path d="M264 367 L322 385" />
        <path d="M680 335 L985 633" />
        <path d="M955 623 L985 633 L978 608" />
      </g>
    </Overlay>
    <RedBox $x={7} $y={326} $w={257} $h={340} />
    <RedBox $x={332} $y={19} $w={196} $h={52} $b={4} />
    <RedBox $x={922} $y={632} $w={244} $h={19} />
    <Note $x={382} $y={224} $size={19.7}>
      ポジションビューのフィルター機能。
      <br />
      <NoteLatin>SELECTED_PAIR</NoteLatin>を選択すると、選択中の通貨ペアだけ表示できます。
      <br />
      フィルター機能を使用するにはオプションの以下のチェックをオンにしてください。
    </Note>
    <Note $x={328} $y={367} $size={20}>
      最大32個まで表示できます。
    </Note>
  </Page>
);

export default App;
